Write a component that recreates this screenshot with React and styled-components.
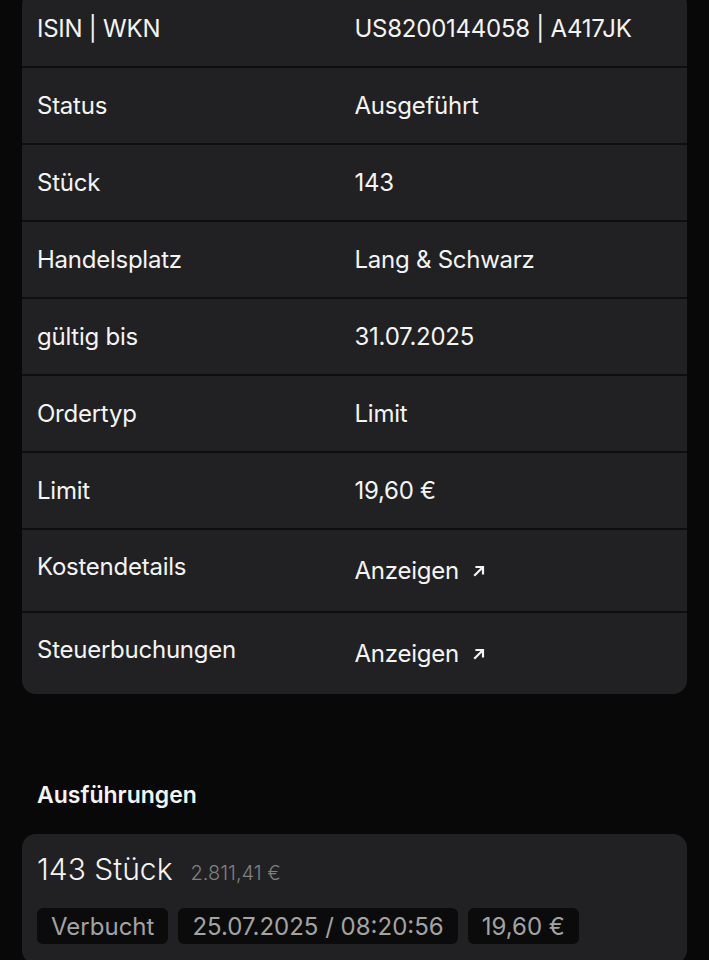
import React from 'react'
import styled, { createGlobalStyle } from 'styled-components'

const GlobalStyle = createGlobalStyle`
    html, body {
        margin: 0;
        padding: 0;
        background-color: #080808;
        font-family: Inter, "Noto Sans", "Liberation Sans", sans-serif;
        color: #f4f4f4;
    }
`

const details = [
    { label: 'ISIN | WKN', value: 'US8200144058 | A417JK' },
    { label: 'Status', value: 'Ausgeführt' },
    { label: 'Stück', value: '143' },
    { label: 'Handelsplatz', value: 'Lang & Schwarz' },
    { label: 'gültig bis', value: '31.07.2025' },
    { label: 'Ordertyp', value: 'Limit' },
    { label: 'Limit', value: '19,60 €' },
    { label: 'Kostendetails', link: 'Anzeigen' },
    { label: 'Steuerbuchungen', link: 'Anzeigen' },
]

const ArrowIcon = () => (
    <svg width="12" height="12" viewBox="0 0 12 12" fill="none">
        <path d="M2 10L9.5 2.5" stroke="#f4f4f4" strokeWidth="2.2" strokeLinecap="square" />
        <path d="M3.5 2H10V8.5" stroke="#f4f4f4" strokeWidth="2.2" strokeLinecap="square" />
    </svg>
)

const App = () => {
    return (
        <Page>
            <GlobalStyle />
            <DetailCard>
                {details.map((row) => (
                    <Row key={row.label} $link={!!row.link}>
                        <Label>{row.label}</Label>
                        {row.link ? (
                            <LinkValue>
                                {row.link}
                                <ArrowIcon />
                            </LinkValue>
                        ) : (
                            <Value>{row.value}</Value>
                        )}
                    </Row>
                ))}
            </DetailCard>

            <SectionTitle>Ausführungen</SectionTitle>

            <ExecutionCard>
                <ExecutionHead>
                    <Amount>143 Stück</Amount>
                    <Total>2.811,41 €</Total>
                </ExecutionHead>
                <ChipRow>
                    <Chip>Verbucht</Chip>
                    <Chip>25.07.2025 / 08:20:56</Chip>
                    <Chip>19,60 €</Chip>
                </ChipRow>
            </ExecutionCard>
        </Page>
    )
}

const Page = styled.div`
    padding: 0 22px;
    height: 960px;
    overflow: hidden;
`

const DetailCard = styled.div`
    margin-top: -9px;
    display: flex;
    flex-direction: column;
    gap: 2px;
    background-color: #0e0e0f;
    border-radius: 14px;
    overflow: hidden;
`

const Row = styled.div`
    display: grid;
    grid-template-columns: 1fr 1fr;
    align-items: ${(p) => (p.$link ? 'start' : 'center')};
    height: ${(p) => (p.$link ? '81px' : '75px')};
    padding: ${(p) => (p.$link ? '25px 15px 0' : '0 15px')};
    box-sizing: border-box;
    background-color: #212123;
    font-size: 24px;
    line-height: 24px;
    letter-spacing: -0.25px;
`

const Label = styled.div`
    font-weight: 400;
`

const Value = styled.div`
    font-weight: 400;
`

const LinkValue = styled.div`
    margin-top: 4px;
    display: flex;
    align-items: center;
    gap: 14px;
`

const SectionTitle = styled.h2`
    margin: 87px 0 25px 15px;
    font-size: 23px;
    line-height: 28px;
    font-weight: 600;
`

const ExecutionCard = styled.div`
    background-color: #212123;
    border-radius: 14px;
    padding: 17px 15px 20px;
`

const ExecutionHead = styled.div`
    display: flex;
    align-items: baseline;
    gap: 18px;
`

const Amount = styled.span`
    font-size: 30px;
    line-height: 36px;
    font-weight: 300;
`

const Total = styled.span`
    font-size: 20px;
    font-weight: 300;
    color: #808080;
`

const ChipRow = styled.div`
    margin-top: 21px;
    display: flex;
    gap: 10px;
`

const Chip = styled.span`
    height: 36px;
    display: flex;
    align-items: center;
    padding: 0 14px;
    border-radius: 6px;
    background-color: #0b0b0b;
    color: #a3a3a3;
    font-size: 24px;
    font-weight: 400;
`

export default App
